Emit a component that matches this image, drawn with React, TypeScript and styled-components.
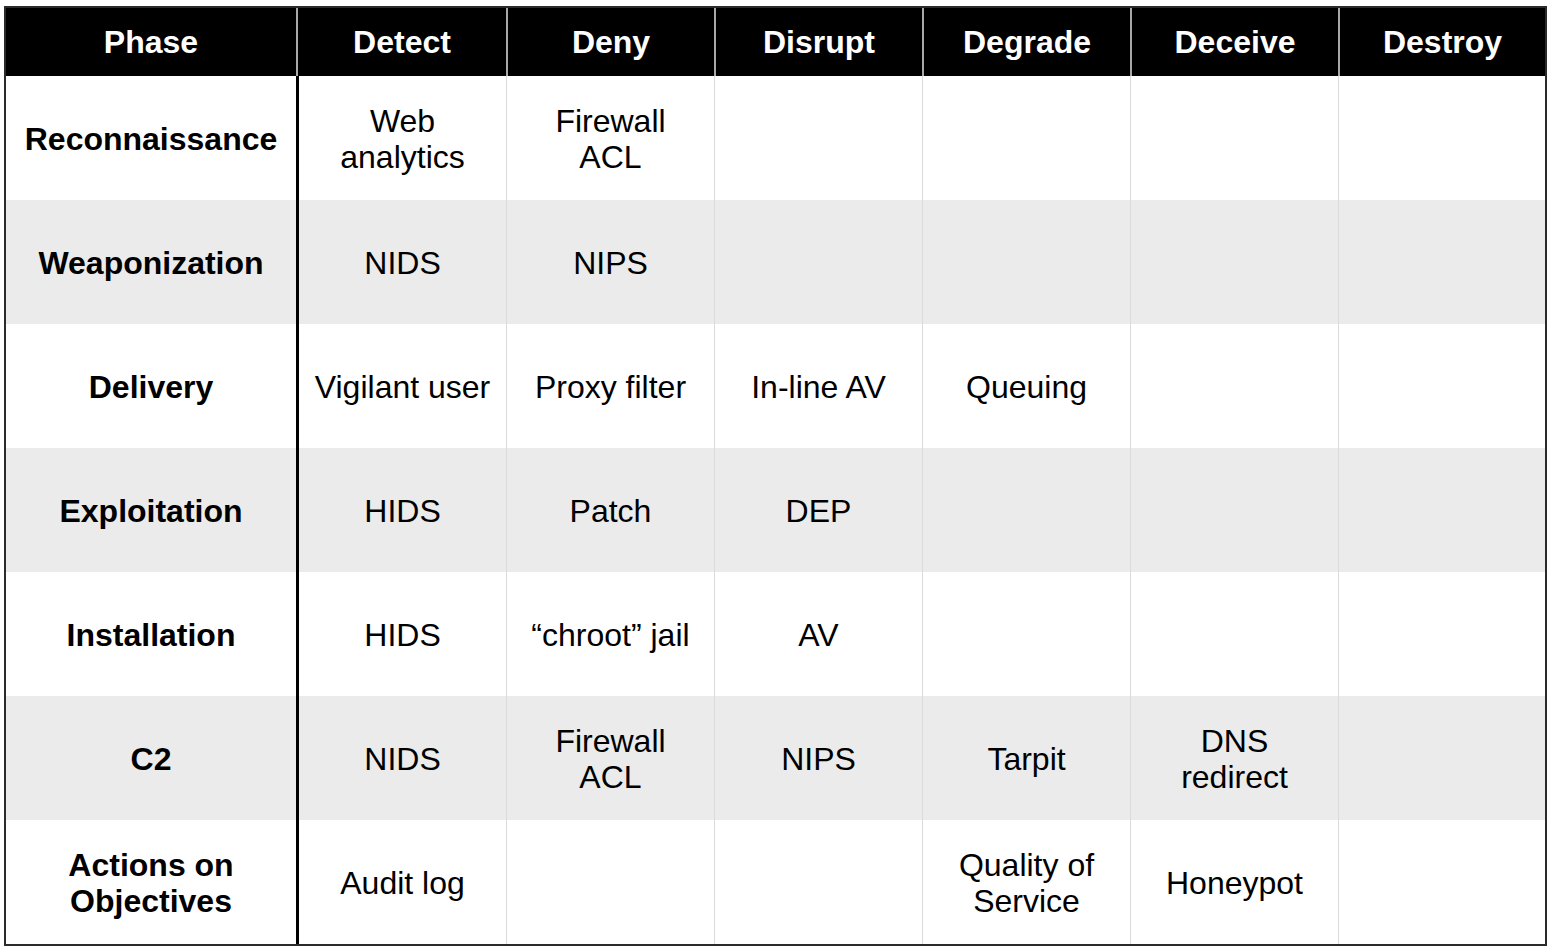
import React from "react";
import styled, { createGlobalStyle } from "styled-components";

const GlobalStyle = createGlobalStyle`
  html, body {
    margin: 0;
    padding: 0;
    background: #ffffff;
  }
  body {
    font-family: "Liberation Sans", Arial, Helvetica, sans-serif;
  }
`;

const Page = styled.div`
  padding: 6px 0 0 4px;
`;

const Grid = styled.div`
  display: grid;
  grid-template-columns: 290px 210px repeat(4, 208px) 207px;
  grid-template-rows: 68px repeat(7, 124px);
  width: fit-content;
  border: 2px solid #2b2b2b;
  font-family: "Liberation Sans", Arial, Helvetica, sans-serif;
  font-size: 32px;
  line-height: 36px;
`;

const HeadCell = styled.div<{ $first?: boolean }>`
  background: #000000;
  color: #ffffff;
  font-weight: 700;
  display: flex;
  align-items: center;
  justify-content: center;
  text-align: center;
  border-left: ${(p) => (p.$first ? "none" : "2px solid #a8a8a8")};
  padding-bottom: 1px;
`;

const Cell = styled.div<{ $shaded: boolean; $divider: "none" | "thick" | "thin"; $bold?: boolean }>`
  background: ${(p) => (p.$shaded ? "#ebebeb" : "#ffffff")};
  color: #000000;
  font-weight: ${(p) => (p.$bold ? 700 : 400)};
  display: flex;
  align-items: center;
  justify-content: center;
  text-align: center;
  border-left: ${(p) =>
    p.$divider === "thick"
      ? "3px solid #000000"
      : p.$divider === "thin"
      ? "1px solid #dadada"
      : "none"};
  padding: 2px 4px 0;
`;

const headers = ["Phase", "Detect", "Deny", "Disrupt", "Degrade", "Deceive", "Destroy"];

const rows: string[][] = [
  ["Reconnaissance", "Web\nanalytics", "Firewall\nACL", "", "", "", ""],
  ["Weaponization", "NIDS", "NIPS", "", "", "", ""],
  ["Delivery", "Vigilant user", "Proxy filter", "In-line AV", "Queuing", "", ""],
  ["Exploitation", "HIDS", "Patch", "DEP", "", "", ""],
  ["Installation", "HIDS", "\u201cchroot\u201d jail", "AV", "", "", ""],
  ["C2", "NIDS", "Firewall\nACL", "NIPS", "Tarpit", "DNS\nredirect", ""],
  ["Actions on\nObjectives", "Audit log", "", "", "Quality of\nService", "Honeypot", ""],
];

const Lines: React.FC<{ text: string }> = ({ text }) => (
  <span>
    {text.split("\n").map((line, i, arr) => (
      <React.Fragment key={i}>
        {line}
        {i < arr.length - 1 && <br />}
      </React.Fragment>
    ))}
  </span>
);

export default function App() {
  return (
    <>
      <GlobalStyle />
      <Page>
        <Grid>
          {headers.map((h, i) => (
            <HeadCell key={h} $first={i === 0}>
              {h}
            </HeadCell>
          ))}
          {rows.map((row, r) =>
            row.map((text, c) => (
              <Cell
                key={`${r}-${c}`}
                $shaded={r % 2 === 1}
                $divider={c === 0 ? "none" : c === 1 ? "thick" : "thin"}
                $bold={c === 0}
              >
                <Lines text={text} />
              </Cell>
            ))
          )}
        </Grid>
      </Page>
    </>
  );
}
